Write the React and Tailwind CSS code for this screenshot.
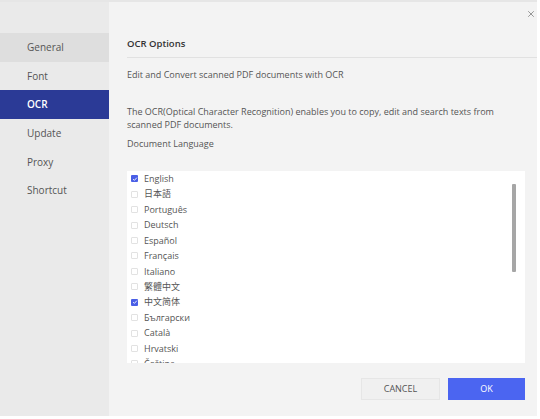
import { X } from "lucide-react";

const menu = ["General", "Font", "OCR", "Update", "Proxy", "Shortcut"];

const languages = [
  { name: "English", checked: true },
  { name: "日本語" },
  { name: "Português" },
  { name: "Deutsch" },
  { name: "Español" },
  { name: "Français" },
  { name: "Italiano" },
  { name: "繁體中文" },
  { name: "中文简体", checked: true },
  { name: "Български" },
  { name: "Català" },
  { name: "Hrvatski" },
  { name: "Čeština" },
];

function Checkbox({ checked }) {
  if (checked) {
    return (
      <span className="flex h-[7px] w-[7px] items-center justify-center rounded-[1px] bg-[#4a5fe6]">
        <svg viewBox="0 0 8 8" className="h-[6px] w-[6px]">
          <path d="M1.5 4.2 L3.2 5.8 L6.5 2.2" fill="none" stroke="white" strokeWidth="1.2" />
        </svg>
      </span>
    );
  }
  return <span className="h-[7px] w-[7px] rounded-[1px] border border-[#e2e2e2] bg-white" />;
}

export default function App() {
  return (
    <div
      className="h-[419px] w-[540px] bg-white text-[#555]"
      style={{ fontFamily: '"Open Sans", "Noto Sans CJK SC", sans-serif' }}
    >
      <div className="flex h-[416px] w-[537px] border-t-2 border-[#e6e6e6]">
        {/* sidebar */}
        <div className="w-[109px] bg-[#eaeaea] pt-[31px]">
          {menu.map((item) => {
            const active = item === "OCR";
            const hover = item === "General";
            return (
              <div
                key={item}
                className={
                  "flex h-[28.7px] items-center pl-[27px] text-[10px] " +
                  (active
                    ? "bg-[#2b3a96] font-semibold text-white"
                    : hover
                    ? "bg-[#dedede] text-[#555]"
                    : "text-[#555]")
                }
              >
                {item}
              </div>
            );
          })}
        </div>

        {/* content */}
        <div className="relative flex flex-1 flex-col bg-[#f3f3f3] pl-[18px] pt-[30px]">
          <button className="absolute right-[1px] top-[7px] text-[#777]">
            <X size={10} strokeWidth={1.8} />
          </button>

          <div className="flex h-[26px] items-center border-b border-[#e1e1e1] text-[9.5px] font-semibold text-[#333]">
            OCR Options
          </div>

          <div className="mr-[12px] mt-[10px] text-[9px] leading-[13px]">
            Edit and Convert scanned PDF documents with OCR
          </div>

          <div className="mr-[12px] mt-[24px] text-[9px] leading-[13px]">
            The OCR(Optical Character Recognition) enables you to copy, edit and search texts from
            <br />
            scanned PDF documents.
          </div>

          <div className="mr-[12px] mt-[6px] text-[9px] leading-[13px]">Document Language</div>

          <div className="relative mr-[12px] mt-[21px] h-[192px] overflow-hidden bg-white">
            <div className="flex flex-col">
              {languages.map((lang) => (
                <div
                  key={lang.name}
                  className="flex h-[15.45px] shrink-0 items-center gap-[6px] pl-[4px] text-[9px] text-[#555]"
                >
                  <Checkbox checked={lang.checked} />
                  <span>{lang.name}</span>
                </div>
              ))}
            </div>
            <div className="absolute right-[9px] top-[13px] h-[88px] w-[4px] rounded-[1px] bg-[#a6a6a6]" />
          </div>

          <div className="mr-[12px] mt-[15px] flex justify-end gap-[8px]">
            <button className="h-[22px] w-[79px] border border-[#e6e6e6] bg-[#f0f0f0] text-[9px] text-[#555]">
              CANCEL
            </button>
            <button className="h-[22px] w-[77px] bg-[#4b65f1] text-[9px] text-white">OK</button>
          </div>
        </div>
      </div>
    </div>
  );
}
